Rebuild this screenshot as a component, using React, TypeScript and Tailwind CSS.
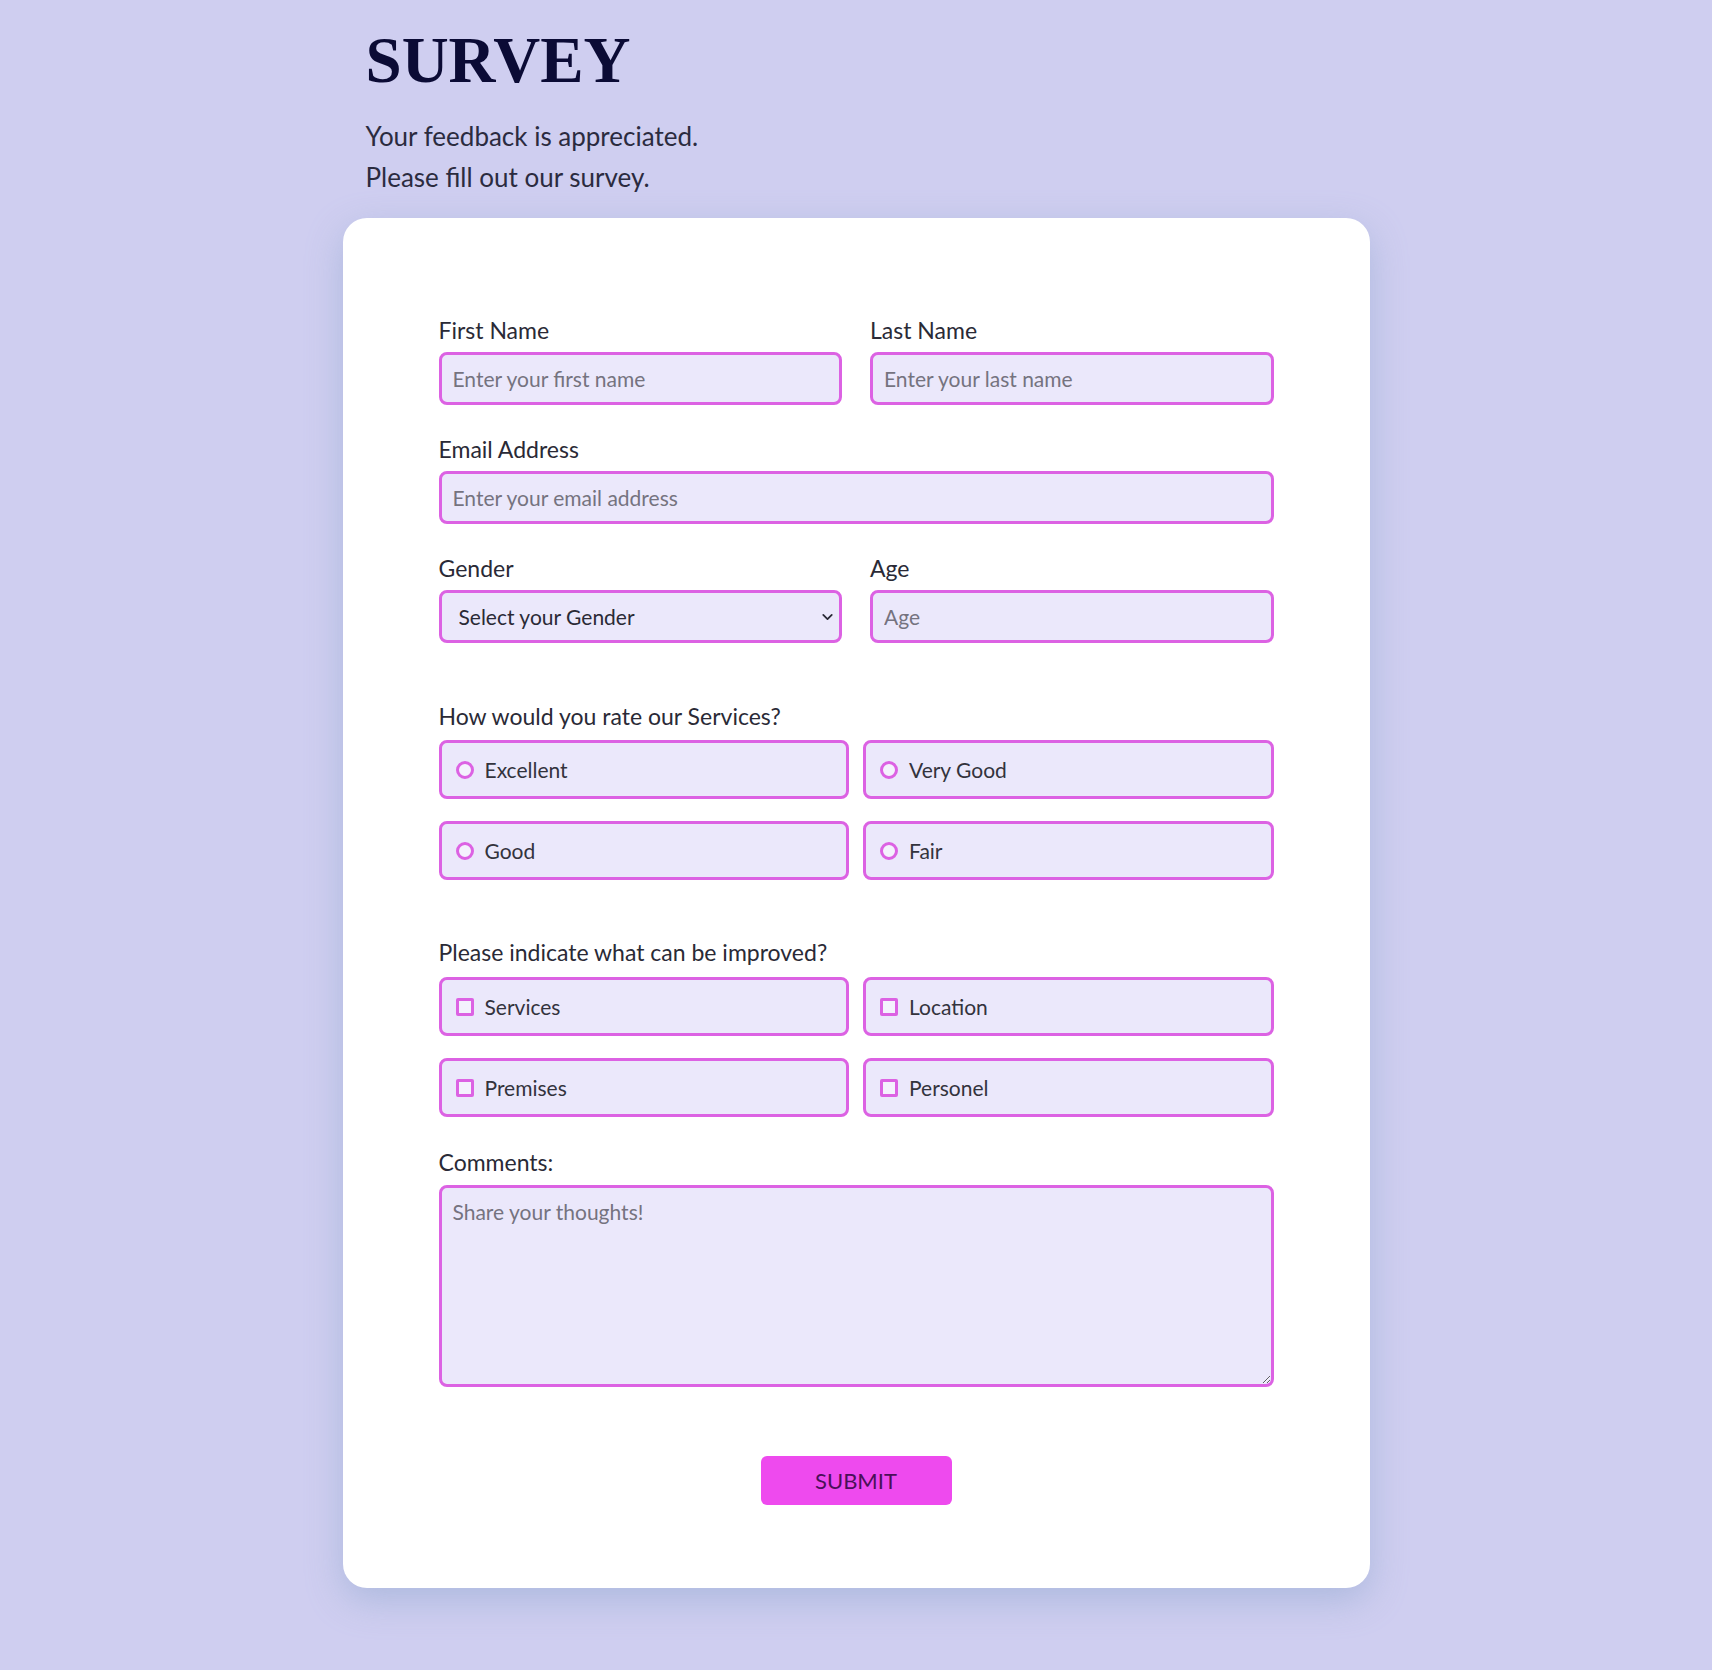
import { ChevronDown } from 'lucide-react'

const ratings = ['Excellent', 'Very Good', 'Good', 'Fair']
const improvements = ['Services', 'Location', 'Premises', 'Personel']

const labelClass = 'mb-2 block text-[23px] leading-[28px] text-[#2a2a36]'
const inputClass =
  'h-[53px] w-full rounded-[8px] border-[3px] border-[#dc62e3] bg-[#ebe8fb] px-[11px] text-[21px] text-[#2a2a36] outline-none placeholder:text-[#75737f]'

function Field({ label, placeholder, type = 'text' }: { label: string; placeholder: string; type?: string }) {
  return (
    <label className="block">
      <span className={labelClass}>{label}</span>
      <input type={type} placeholder={placeholder} className={inputClass} />
    </label>
  )
}

function OptionBox({ label, kind, name }: { label: string; kind: 'radio' | 'checkbox'; name: string }) {
  return (
    <label className="flex h-[59px] items-center gap-[11px] rounded-[8px] border-[3px] border-[#dc62e3] bg-[#ebe8fb] px-[14px] text-[21px] text-[#33333d]">
      <input
        type={kind}
        name={name}
        className={
          kind === 'radio'
            ? 'h-[18px] w-[18px] appearance-none rounded-full border-[3px] border-[#dc62e3] bg-[#f4f2fd]'
            : 'h-[18px] w-[18px] appearance-none rounded-[2px] border-[3px] border-[#dc62e3] bg-[#f4f2fd]'
        }
      />
      {label}
    </label>
  )
}

export default function App() {
  return (
    <div className="min-h-[1670px] bg-[#cfcef0] font-['Lato',sans-serif]">
      <div className="mx-auto w-[1027px] pt-[28px]">
        <header className="pl-[23px]">
          <h1 className="font-['Liberation_Serif',serif] text-[65px] font-bold leading-[64px] text-[#0b0b35]">SURVEY</h1>
          <p className="mt-[24px] text-[26px] leading-[41px] text-[#2b2b3f]">
            Your feedback is appreciated.
            <br />
            Please fill out our survey.
          </p>
        </header>

        <form className="mt-[20px] rounded-[24px] bg-white px-[96px] pt-[98px] pb-[83px] shadow-[0_12px_36px_rgba(130,160,200,0.45)]">
          <div className="grid grid-cols-2 gap-x-[28px]">
            <Field label="First Name" placeholder="Enter your first name" />
            <Field label="Last Name" placeholder="Enter your last name" />
          </div>

          <div className="mt-[30px]">
            <Field label="Email Address" placeholder="Enter your email address" type="email" />
          </div>

          <div className="mt-[30px] grid grid-cols-2 gap-x-[28px]">
            <label className="block">
              <span className={labelClass}>Gender</span>
              <div className="relative">
                <select className={`${inputClass} appearance-none pl-[17px] text-[#2a2a36]`} defaultValue="">
                  <option value="">Select your Gender</option>
                  <option value="male">Male</option>
                  <option value="female">Female</option>
                  <option value="other">Other</option>
                </select>
                <ChevronDown className="pointer-events-none absolute top-1/2 right-[6px] h-[17px] w-[17px] -translate-y-1/2 text-[#2a2a36]" strokeWidth={2.5} />
              </div>
            </label>
            <Field label="Age" placeholder="Age" type="number" />
          </div>

          <fieldset className="mt-[59px]">
            <legend className="mb-[10px] text-[23px] leading-[28px] text-[#2a2a36]">How would you rate our Services?</legend>
            <div className="grid grid-cols-2 gap-x-[14px] gap-y-[22px]">
              {ratings.map((r) => (
                <OptionBox key={r} label={r} kind="radio" name="rating" />
              ))}
            </div>
          </fieldset>

          <fieldset className="mt-[58px]">
            <legend className="mb-[11px] text-[23px] leading-[28px] text-[#2a2a36]">Please indicate what can be improved?</legend>
            <div className="grid grid-cols-2 gap-x-[14px] gap-y-[22px]">
              {improvements.map((r) => (
                <OptionBox key={r} label={r} kind="checkbox" name="improve" />
              ))}
            </div>
          </fieldset>

          <label className="mt-[31px] block">
            <span className="mb-[9px] block text-[23px] leading-[28px] text-[#2a2a36]">Comments:</span>
            <textarea
              placeholder="Share your thoughts!"
              className="block h-[202px] w-full rounded-[8px] border-[3px] border-[#dc62e3] bg-[#ebe8fb] px-[11px] py-[8px] text-[21px] text-[#2a2a36] outline-none placeholder:text-[#75737f]"
            />
          </label>

          <div className="mt-[69px] flex justify-center">
            <button type="submit" className="h-[49px] w-[191px] rounded-[6px] bg-[#ee4aee] text-[22px] text-[#4a1058]">
              SUBMIT
            </button>
          </div>
        </form>
      </div>
    </div>
  )
}
